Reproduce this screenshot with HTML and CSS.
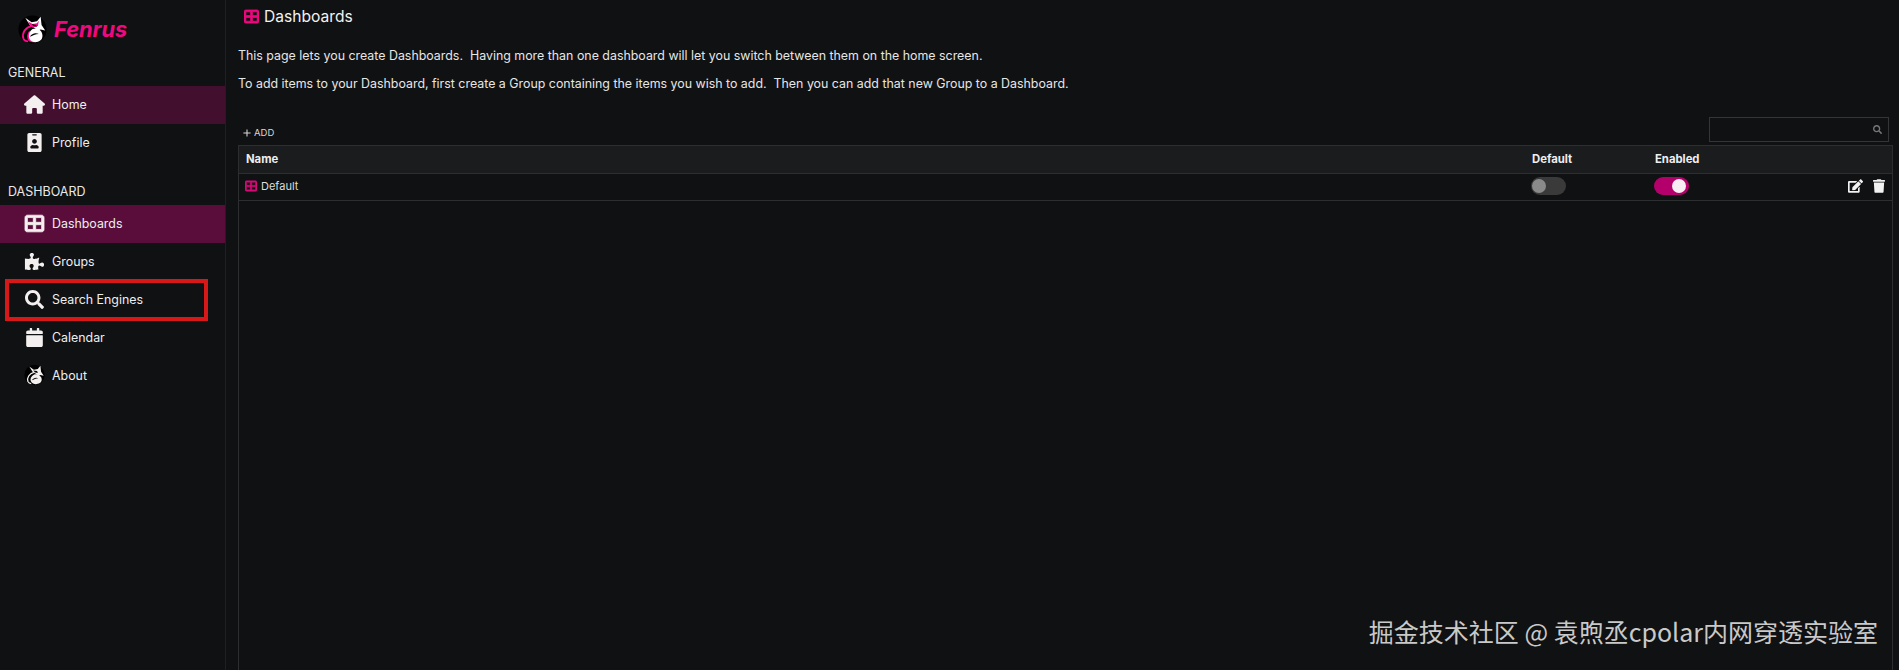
FILE: index.html
```html
<!DOCTYPE html>
<html lang="en">
<head>
    <meta charset="UTF-8">
    <title>Fenrus</title>
    <link rel="stylesheet" href="styles.css">
</head>
<body>
    <svg class="defs" width="0" height="0">
        <symbol id="i-grid" viewBox="0 0 512 512"><path fill-rule="evenodd" d="M448 96V224H288V96H448zm0 192V416H288V288H448zM224 224H64V96H224V224zM64 288H224V416H64V288zM64 32C28.7 32 0 60.7 0 96V416c0 35.3 28.7 64 64 64H448c35.3 0 64-28.7 64-64V96c0-35.3-28.7-64-64-64H64z"/></symbol>
        <symbol id="i-search" viewBox="0 0 512 512"><path d="M505 442.7L405.3 343c-4.5-4.5-10.6-7-17-7H372c27.6-35.3 44-79.7 44-128C416 93.1 322.9 0 208 0S0 93.1 0 208s93.1 208 208 208c48.3 0 92.7-16.4 128-44v16.3c0 6.4 2.5 12.5 7 17l99.7 99.7c9.4 9.4 24.6 9.4 33.9 0l28.3-28.3c9.4-9.4 9.4-24.6.1-34zM208 336c-70.7 0-128-57.2-128-128 0-70.7 57.2-128 128-128 70.7 0 128 57.2 128 128 0 70.7-57.2 128-128 128z"/></symbol>
        <symbol id="i-fox" viewBox="0 0 32 32">
            <circle cx="16" cy="16" r="15.500" fill="#000"/>
            <path fill="none" stroke="#f5f0f0" stroke-width="2" d="M15 12C8 14 4 20 6 26c1 2 3 3 5 3"/>
            <path fill="#f5f0f0" d="M8 3l7 5 6-1 4-5 1 9 4 6-5-1-3 1-4-3-5-3z"/>
            <path fill="#000" d="M14 9l6 1 1 3-4-1z"/>
            <path fill="#f5f0f0" d="M18 15c5 0 9 4 9 8 0 5-5 7-9 7-5 0-8-3-8-7 0-4 4-8 8-8z"/>
            <path fill="#000" d="M12 24c2-4 7-5 10-3-4 0-7 2-10 3z"/>
        </symbol>
    </svg>

    <div class="app">
        <aside class="sidebar">
            <div class="brand">
                <svg class="brand-logo" viewBox="0 0 32 32">
                    <circle cx="16" cy="16" r="15.500" fill="#000"/>
                    <path fill="none" stroke="#ff0a8c" stroke-width="2" d="M15 12C8 14 4 20 6 26c1 2 3 3 5 3"/>
                    <path fill="#fff" d="M8 3l7 5 6-1 4-5 1 9 4 6-5-1-3 1-4-3-5-3z"/>
                    <path fill="#ff0a8c" d="M11 7l5 3 5-1 2-3-1 6-6 2-3-3z"/>
                    <path fill="#000" d="M15 10l5 1 1 2-4-1z"/>
                    <path fill="#ff0a8c" d="M13 17c-3 3-4 8-1 12 2 1 4 1 6 1-3-3-5-8-5-13z"/>
                    <path fill="#fff" d="M19 15c5 0 8 4 8 8 0 5-4 7-8 7-5 0-7-3-7-7 0-4 3-8 7-8z"/>
                    <path fill="#000" d="M13 24c2-4 7-5 10-3-4 0-7 2-10 3z"/>
                </svg>
                <span class="brand-name">Fenrus</span>
            </div>

            <div class="nav-title">GENERAL</div>
            <a class="nav-item home-on">
                <svg class="nav-icon" viewBox="0 0 576 512"><path d="M575.800 255.500c0 18-15 32.100-32 32.100h-32l.7 160.200c0 2.700-.2 5.400-.5 8.100V472c0 22.100-17.900 40-40 40H456c-1.100 0-2.200 0-3.300-.1c-1.400 .1-2.800 .1-4.200 .1H416 392c-22.100 0-40-17.900-40-40V448 384c0-17.700-14.300-32-32-32H256c-17.700 0-32 14.300-32 32v64 24c0 22.100-17.900 40-40 40H160 128.100c-1.500 0-3-.1-4.500-.2c-1.200 .1-2.400 .2-3.600 .2H104c-22.100 0-40-17.900-40-40V360c0-.9 0-1.900 .1-2.800V287.600H32c-18 0-32-14-32-32.100c0-9 3-17 10-24L266.400 8c7-7 15-8 22-8s15 2 21 7L564.800 231.500c8 7 12 15 11 24z"/></svg>
                <span>Home</span>
            </a>
            <a class="nav-item">
                <svg class="nav-icon" viewBox="0 0 384 512"><path d="M336 0H48C21.500 0 0 21.500 0 48v416c0 26.500 21.500 48 48 48h288c26.500 0 48-21.500 48-48V48c0-26.500-21.500-48-48-48zM144 32h96c8.800 0 16 7.200 16 16s-7.200 16-16 16h-96c-8.800 0-16-7.200-16-16s7.200-16 16-16zm48 128c35.300 0 64 28.700 64 64s-28.700 64-64 64-64-28.700-64-64 28.700-64 64-64zm112 236.800c0 10.600-10 19.200-22.400 19.200H102.400C90 416 80 407.400 80 396.800v-19.200c0-31.800 30.100-57.600 67.200-57.600h5c12.300 5.100 25.700 8 39.800 8s27.600-2.900 39.800-8h5c37.100 0 67.200 25.800 67.200 57.600v19.200z"/></svg>
                <span>Profile</span>
            </a>

            <div class="nav-title second">DASHBOARD</div>
            <a class="nav-item dash-on">
                <svg class="nav-icon grid-icon"><use href="#i-grid"/></svg>
                <span>Dashboards</span>
            </a>
            <a class="nav-item">
                <svg class="nav-icon puzzle" viewBox="0 0 576 512"><path d="M519.442 288.651c-41.519 0-59.500 31.593-82.058 31.593C377.409 320.244 432 144 432 144s-196.288 80-196.288-3.297c0-35.827 36.288-46.250 36.288-85.985C272 19.216 243.885 0 210.539 0c-34.654 0-66.366 18.891-66.366 56.346 0 41.364 31.711 59.277 31.711 81.750C175.885 207.719 0 166.758 0 166.758v333.237s178.635 41.047 178.635-28.662c0-22.473-40-40.107-40-81.471 0-37.456 29.250-56.346 63.577-56.346 33.673 0 61.788 19.216 61.788 54.717 0 39.735-36.288 50.158-36.288 85.985 0 60.803 129.675 25.730 181.230 25.730 0 0-34.725-120.101 25.827-120.101 35.962 0 46.423 36.152 86.308 36.152C556.712 416 576 387.990 576 354.443c0-34.199-18.962-65.792-56.558-65.792z"/></svg>
                <span>Groups</span>
            </a>
            <a class="nav-item marked">
                <svg class="nav-icon"><use href="#i-search"/></svg>
                <span>Search Engines</span>
            </a>
            <a class="nav-item">
                <svg class="nav-icon" viewBox="0 0 448 512"><path d="M12 192h424c6.600 0 12 5.400 12 12v260c0 26.500-21.500 48-48 48H48c-26.500 0-48-21.500-48-48V204c0-6.600 5.400-12 12-12zm436-44v-36c0-26.500-21.500-48-48-48h-48V12c0-6.600-5.400-12-12-12h-40c-6.600 0-12 5.400-12 12v52H160V12c0-6.600-5.400-12-12-12h-40c-6.600 0-12 5.400-12 12v52H48C21.500 64 0 85.500 0 112v36c0 6.600 5.400 12 12 12h424c6.600 0 12-5.400 12-12z"/></svg>
                <span>Calendar</span>
            </a>
            <a class="nav-item">
                <svg class="nav-icon fox"><use href="#i-fox"/></svg>
                <span>About</span>
            </a>
        </aside>

        <main class="content">
            <h1 class="page-title">
                <svg class="title-icon"><use href="#i-grid"/></svg>
                Dashboards
            </h1>
            <p class="intro">This page lets you create Dashboards.&nbsp; Having more than one dashboard will let you switch between them on the home screen.</p>
            <p class="intro">To add items to your Dashboard, first create a Group containing the items you wish to add.&nbsp; Then you can add that new Group to a Dashboard.</p>

            <div class="toolbar">
                <a class="add-btn">
                    <svg class="plus" viewBox="0 0 10 10"><path d="M5 .5v9M.5 5h9"/></svg>
                    ADD
                </a>
                <div class="search-box">
                    <svg class="search-icon"><use href="#i-search"/></svg>
                </div>
            </div>

            <div class="table-wrap">
                <table class="grid">
                    <thead>
                        <tr>
                            <th class="col-name">Name</th>
                            <th class="col-default">Default</th>
                            <th class="col-enabled">Enabled</th>
                            <th></th>
                        </tr>
                    </thead>
                    <tbody>
                        <tr>
                            <td>
                                <span class="name-cell">
                                    <svg class="row-icon"><use href="#i-grid"/></svg>
                                    Default
                                </span>
                            </td>
                            <td><span class="toggle"><span class="knob"></span></span></td>
                            <td><span class="toggle on"><span class="knob"></span></span></td>
                            <td>
                                <div class="actions">
                                    <svg class="act-edit" viewBox="0 0 576 512"><path d="M402.600 83.200l90.200 90.200c3.800 3.800 3.800 10 0 13.800L274.400 405.600l-92.800 10.300c-12.400 1.400-22.900-9.100-21.500-21.500l10.300-92.800L388.800 83.200c3.800-3.800 10-3.800 13.800 0zm162-22.900l-48.800-48.800c-15.200-15.200-39.900-15.200-55.200 0l-35.400 35.400c-3.800 3.800-3.800 10 0 13.800l90.200 90.200c3.800 3.800 10 3.800 13.800 0l35.400-35.400c15.200-15.300 15.200-40 0-55.200zM384 346.200V448H64V128h229.800c3.200 0 6.200-1.300 8.500-3.500l40-40c7.600-7.600 2.200-20.500-8.500-20.500H48C21.500 64 0 85.500 0 112v352c0 26.500 21.500 48 48 48h352c26.500 0 48-21.500 48-48V306.200c0-10.700-12.900-16-20.500-8.500l-40 40c-2.200 2.300-3.500 5.300-3.500 8.500z"/></svg>
                                    <svg class="act-trash" viewBox="0 0 448 512"><path d="M432 32H312l-9.400-18.700A24 24 0 0 0 281.100 0H166.800a23.720 23.720 0 0 0-21.400 13.300L136 32H16A16 16 0 0 0 0 48v32a16 16 0 0 0 16 16h416a16 16 0 0 0 16-16V48a16 16 0 0 0-16-16zM53.200 467a48 48 0 0 0 47.900 45h245.800a48 48 0 0 0 47.900-45L416 128H32z"/></svg>
                                </div>
                            </td>
                        </tr>
                    </tbody>
                </table>
            </div>
        </main>
    </div>

    <div class="watermark">掘金技术社区 @ 袁煦丞cpolar内网穿透实验室</div>
</body>
</html>
```

FILE: styles.css
```css
* {
    box-sizing: border-box;
}
html, body {
    height: 100%;
}
body {
    margin: 0;
    overflow: hidden;
    background-color: #101113;
    color: #f2f2f2;
    font-family: "Inter", "Open Sans", sans-serif;
    font-size: 12px;
}
.defs {
    display: block;
}
.app {
    display: flex;
    height: 100%;
}

/* sidebar */
.sidebar {
    flex: 0 0 226px;
    border-right: 1px solid #1d1f21;
}
.brand {
    display: flex;
    align-items: center;
    gap: 7px;
    height: 58px;
    padding-left: 18px;
}
.brand-logo {
    width: 29px;
    height: 29px;
}
.brand-name {
    color: #f0087f;
    font-size: 21.800px;
    font-weight: 700;
    font-style: italic;
}
.nav-title {
    height: 28px;
    padding: 7px 0 0 8px;
    font-size: 12.500px;
    color: #e8e8e8;
}
.nav-title.second {
    margin-top: 15px;
}
.nav-item {
    display: flex;
    align-items: center;
    height: 38px;
    padding: 0 0 2px 24px;
    font-size: 12.400px;
    color: #eee;
}
.nav-icon {
    flex: 0 0 21px;
    width: 21px;
    height: 19px;
    margin-right: 7px;
    fill: #f5f0f0;
}
.nav-icon.fox {
    height: 22px;
}
.nav-icon.puzzle {
    height: 17px;
}
.grid-icon {
    overflow: visible;
    stroke: #f5f0f0;
    stroke-width: 22;
}
.home-on {
    background-color: #430f2f;
}
.dash-on {
    background-color: #5a0d3b;
}
.marked {
    outline: 4px solid #d71818;
    outline-offset: -2px;
    width: 199px;
    margin-left: 7px;
    padding-left: 17px;
}

/* main */
.content {
    flex: 1;
    display: flex;
    flex-direction: column;
    min-width: 0;
    padding: 0 6px 0 12px;
}
.page-title {
    display: flex;
    align-items: center;
    gap: 5px;
    height: 32px;
    margin: 0;
    padding-left: 6px;
    font-size: 15.600px;
    font-weight: 400;
}
.title-icon {
    width: 15px;
    height: 15px;
    overflow: visible;
    fill: #f0087f;
    stroke: #f0087f;
    stroke-width: 24;
}
.intro {
    margin: 0;
    height: 28px;
    line-height: 28px;
    font-size: 12.400px;
    color: #e6e6e6;
}
.intro:first-of-type {
    margin-top: 10px;
}
.toolbar {
    display: flex;
    justify-content: space-between;
    align-items: flex-end;
    height: 45px;
    margin-top: 2px;
}
.add-btn {
    display: flex;
    align-items: center;
    gap: 3px;
    padding: 0 0 7px 5px;
    font-size: 9.500px;
    color: #d8d8d8;
}
.plus {
    width: 8px;
    height: 8px;
    stroke: #d8d8d8;
    stroke-width: 1.300;
}
.search-box {
    display: flex;
    align-items: center;
    justify-content: flex-end;
    width: 180px;
    height: 25px;
    margin-right: 4px;
    margin-bottom: 3px;
    padding-right: 6px;
    border: 1px solid #333538;
}
.search-icon {
    width: 9px;
    height: 9px;
    fill: #777;
}
.table-wrap {
    flex: 1;
    border: 1px solid #2c2e30;
    border-bottom: 0;
}
.grid {
    width: 100%;
    border-collapse: collapse;
    table-layout: fixed;
}
.grid th {
    height: 27px;
    padding: 0 7px;
    background-color: #1b1c1e;
    border-bottom: 1px solid #2c2e30;
    text-align: left;
    font-size: 11.300px;
    font-weight: 700;
    color: #eee;
}
.grid td {
    height: 27px;
    padding: 0 7px 2px;
    border-bottom: 1px solid #2c2e30;
    font-size: 11px;
    color: #ddd;
    vertical-align: middle;
}
.col-default, .col-enabled {
    width: 123px;
}
.grid th:last-child {
    width: 121px;
}
.name-cell {
    display: flex;
    align-items: center;
    gap: 4px;
    margin-left: -1px;
}
.row-icon {
    width: 12px;
    height: 12px;
    overflow: visible;
    fill: #d80b78;
    stroke: #d80b78;
    stroke-width: 20;
}
.toggle {
    display: block;
    position: relative;
    width: 35px;
    height: 18px;
    margin-left: -1px;
    border-radius: 9px;
    background-color: #3a3a3a;
}
.knob {
    position: absolute;
    top: 2px;
    left: 1px;
    width: 14px;
    height: 14px;
    border-radius: 50%;
    background-color: #8a8a8a;
}
.toggle.on {
    background-color: #b4006a;
}
.toggle.on .knob {
    left: 18px;
    background-color: #f6eef3;
}
.actions {
    display: flex;
    justify-content: flex-end;
    align-items: center;
    gap: 10px;
    height: 100%;
}
.act-edit {
    width: 15px;
    height: 14px;
    fill: #f2f2f2;
}
.act-trash {
    width: 12px;
    height: 14px;
    fill: #f2f2f2;
}

/* overlay */
.watermark {
    position: absolute;
    right: 21px;
    bottom: 21px;
    font-family: "Noto Sans CJK SC", sans-serif;
    font-size: 25px;
    color: #c9c9c9;
    white-space: nowrap;
}
```
